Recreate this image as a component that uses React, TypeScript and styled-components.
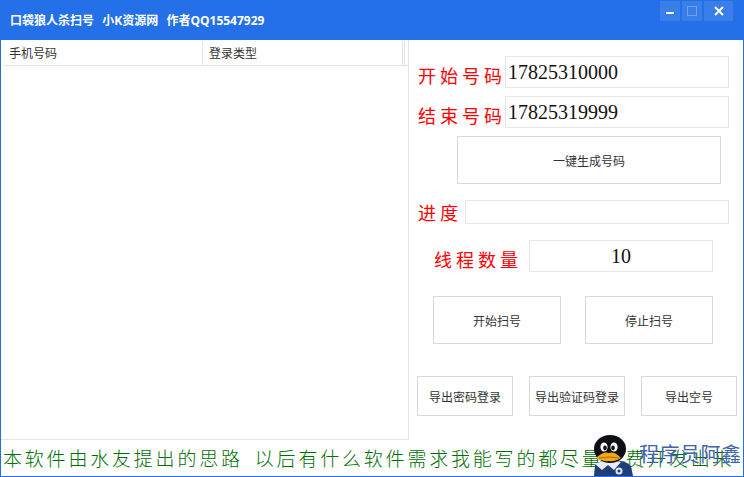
import React from 'react';
import styled, { createGlobalStyle } from 'styled-components';

const GlobalStyle = createGlobalStyle`
  html, body {
    margin: 0;
    padding: 0;
    background: #fff;
  }
  * {
    box-sizing: border-box;
  }
`;

const Window = styled.div`
  position: relative;
  width: 744px;
  height: 477px;
  display: flex;
  flex-direction: column;
  overflow: hidden;
  background: #fff;
  border: 1px solid #2470e8;
  border-top: 0;
  font-family: 'Noto Sans CJK SC', 'Liberation Sans', sans-serif;
`;

const TitleBar = styled.div`
  height: 40px;
  flex: none;
  margin: 0 -1px;
  padding: 0 11px 0 10px;
  display: flex;
  justify-content: space-between;
  align-items: flex-start;
  background: #2470e8;
`;

const Title = styled.div`
  margin-top: 12px;
  font-family: 'Open Sans', 'Noto Sans CJK SC', sans-serif;
  font-size: 12px;
  line-height: 17px;
  font-weight: 700;
  word-spacing: 1px;
  color: #fff;
  white-space: pre;
`;

const WindowButtons = styled.div`
  display: flex;
  gap: 2px;
  margin-top: 1px;
`;

const WindowButton = styled.div<{ $width: number }>`
  width: ${(p) => p.$width}px;
  height: 20px;
  display: flex;
  align-items: center;
  justify-content: center;
  background: #3a7eea;
`;

const Main = styled.div`
  flex: 1;
  display: flex;
  min-height: 0;
`;

const ListPanel = styled.div`
  width: 408px;
  height: 400px;
  flex: none;
  border-right: 1px solid #e4e4e4;
  border-bottom: 1px solid #e4e4e4;
`;

const ListHeader = styled.div`
  height: 25px;
  margin: 1px 0 0 2px;
  padding-right: 4px;
  display: flex;
  border-bottom: 1px solid #e4e4e4;
`;

const HeaderCell = styled.div<{ $width: number }>`
  width: ${(p) => p.$width}px;
  flex: none;
  padding-left: 6px;
  border-right: 1px solid #e4e4e4;
  font-size: 12px;
  line-height: 24px;
  color: #333;
`;

const HeaderTail = styled.div`
  width: 2px;
  flex: none;
  border-right: 1px solid #e4e4e4;
`;

const FormPanel = styled.div`
  flex: 1;
  display: flex;
  flex-direction: column;
`;

const Row = styled.div<{ $left: number; $top: number; $gap?: number }>`
  display: flex;
  align-items: flex-start;
  margin: ${(p) => p.$top}px 0 0 ${(p) => p.$left}px;
  gap: ${(p) => p.$gap ?? 0}px;
`;

const RedLabel = styled.div<{ $width: number; $top: number }>`
  width: ${(p) => p.$width}px;
  flex: none;
  margin-top: ${(p) => p.$top}px;
  font-size: 18px;
  line-height: 24px;
  font-weight: 400;
  letter-spacing: 4px;
  color: #f00;
  white-space: nowrap;
`;

const Field = styled.div<{ $width: number; $height?: number; $center?: boolean }>`
  width: ${(p) => p.$width}px;
  height: ${(p) => p.$height ?? 32}px;
  flex: none;
  padding-left: ${(p) => (p.$center ? 0 : 2)}px;
  border: 1px solid #e4e4e4;
  font-family: 'Liberation Serif', serif;
  font-size: 20px;
  line-height: 30px;
  color: #111;
  text-align: ${(p) => (p.$center ? 'center' : 'left')};
`;

const ActionButton = styled.button<{ $width: number; $height: number }>`
  width: ${(p) => p.$width}px;
  height: ${(p) => p.$height}px;
  flex: none;
  padding: 0;
  background: #fff;
  border: 1px solid #d8d8d8;
  border-radius: 0;
  font-family: inherit;
  font-size: 12px;
  color: #333;
`;

const Footer = styled.div`
  position: relative;
  flex: none;
  height: 36px;
  padding: 2px 0 0 2px;
  font-size: 19px;
  line-height: 32px;
  font-weight: 300;
  letter-spacing: 2.8px;
  word-spacing: 5px;
  color: #006f00;
  white-space: pre;
  overflow: hidden;
`;

const Watermark = styled.div`
  position: absolute;
  left: 591px;
  bottom: 0;
  height: 41px;
  display: flex;
  align-items: flex-start;
  gap: 5px;
`;

const WatermarkText = styled.div`
  margin-top: 6px;
  font-size: 20px;
  line-height: 26px;
  letter-spacing: 0.5px;
  color: #3f63ad;
  white-space: nowrap;
`;

function Penguin() {
  return (
    <svg width="42" height="41" viewBox="0 0 42 41">
      <path d="M2 41 L3 30 Q8 25 20 25 Q34 25 39 31 L41 41 Z" fill="#1f3f7a" />
      <path d="M3 29 L10 35 L16 30 L22 35 L29 27 L16 24 Z" fill="#e8edf5" />
      <ellipse cx="18" cy="14" rx="16" ry="14" fill="#0c0f16" />
      <ellipse cx="12" cy="12" rx="3.6" ry="4.6" fill="#fff" />
      <ellipse cx="22" cy="12" rx="3.6" ry="4.6" fill="#fff" />
      <ellipse cx="13" cy="13" rx="1.8" ry="2.4" fill="#111" />
      <ellipse cx="21" cy="13" rx="1.8" ry="2.4" fill="#111" />
      <path d="M4 23 Q12 16 17 18 Q22 16 29 23 Q22 27 17 26 Q10 27 4 23 Z" fill="#f3a90f" />
      <path d="M7 23 Q17 21 27 23" stroke="#a86a05" strokeWidth="1" fill="none" />
      <circle cx="27" cy="36" r="3.5" fill="#dfe7f2" />
      <circle cx="27" cy="36" r="1.5" fill="#1f3f7a" />
    </svg>
  );
}

export default function App() {
  return (
    <>
      <GlobalStyle />
      <Window>
        <TitleBar>
          <Title>{'口袋狼人杀扫号  小K资源网  作者QQ15547929'}</Title>
          <WindowButtons>
            <WindowButton $width={20}>
              <svg width="10" height="10" viewBox="0 0 10 10">
                <rect x="1" y="6" width="8" height="2" fill="#fff" />
              </svg>
            </WindowButton>
            <WindowButton $width={20}>
              <svg width="10" height="10" viewBox="0 0 10 10">
                <rect x="0.5" y="0.5" width="9" height="9" fill="none" stroke="#6fa3f2" />
              </svg>
            </WindowButton>
            <WindowButton $width={29}>
              <svg width="10" height="10" viewBox="0 0 10 10">
                <path d="M1 1 L9 9 M9 1 L1 9" stroke="#fff" strokeWidth="2" />
              </svg>
            </WindowButton>
          </WindowButtons>
        </TitleBar>
        <Main>
          <ListPanel>
            <ListHeader>
              <HeaderCell $width={200}>手机号码</HeaderCell>
              <HeaderCell $width={200}>登录类型</HeaderCell>
              <HeaderTail />
            </ListHeader>
          </ListPanel>
          <FormPanel>
            <Row $left={9} $top={16}>
              <RedLabel $width={87} $top={7}>开始号码</RedLabel>
              <Field $width={224}>17825310000</Field>
            </Row>
            <Row $left={9} $top={8}>
              <RedLabel $width={87} $top={7}>结束号码</RedLabel>
              <Field $width={224}>17825319999</Field>
            </Row>
            <Row $left={48} $top={8}>
              <ActionButton $width={264} $height={48}>一键生成号码</ActionButton>
            </Row>
            <Row $left={9} $top={16}>
              <RedLabel $width={47} $top={0}>进度</RedLabel>
              <Field $width={264} $height={24} />
            </Row>
            <Row $left={25} $top={16}>
              <RedLabel $width={95} $top={7}>线程数量</RedLabel>
              <Field $width={184} $center>10</Field>
            </Row>
            <Row $left={24} $top={24} $gap={24}>
              <ActionButton $width={128} $height={48}>开始扫号</ActionButton>
              <ActionButton $width={128} $height={48}>停止扫号</ActionButton>
            </Row>
            <Row $left={8} $top={32} $gap={16}>
              <ActionButton $width={96} $height={40}>导出密码登录</ActionButton>
              <ActionButton $width={96} $height={40}>导出验证码登录</ActionButton>
              <ActionButton $width={96} $height={40}>导出空号</ActionButton>
            </Row>
          </FormPanel>
        </Main>
        <Footer>{'本软件由水友提出的思路 以后有什么软件需求我能写的都尽量免费开发出来'}</Footer>
        <Watermark>
          <Penguin />
          <WatermarkText>程序员阿鑫</WatermarkText>
        </Watermark>
      </Window>
    </>
  );
}
